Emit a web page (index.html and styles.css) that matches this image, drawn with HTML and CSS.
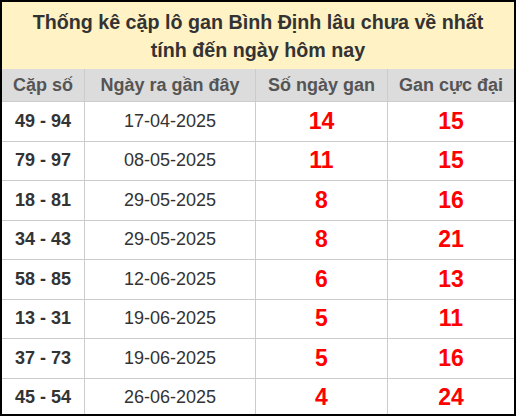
FILE: index.html
```html
<!DOCTYPE html>
<html lang="vi">
<head>
<meta charset="utf-8">
<link rel="stylesheet" href="styles.css">
</head>
<body>
<div class="wrap">
  <div class="title">Thống kê cặp lô gan Bình Định lâu chưa về nhất<br>tính đến ngày hôm nay</div>
  <div class="row head">
    <div class="cell">Cặp số</div>
    <div class="cell">Ngày ra gần đây</div>
    <div class="cell">Số ngày gan</div>
    <div class="cell">Gan cực đại</div>
  </div>
  <div class="row"><div class="cell pair">49 - 94</div><div class="cell date">17-04-2025</div><div class="cell num">14</div><div class="cell num">15</div></div>
  <div class="row"><div class="cell pair">79 - 97</div><div class="cell date">08-05-2025</div><div class="cell num">11</div><div class="cell num">15</div></div>
  <div class="row"><div class="cell pair">18 - 81</div><div class="cell date">29-05-2025</div><div class="cell num">8</div><div class="cell num">16</div></div>
  <div class="row"><div class="cell pair">34 - 43</div><div class="cell date">29-05-2025</div><div class="cell num">8</div><div class="cell num">21</div></div>
  <div class="row"><div class="cell pair">58 - 85</div><div class="cell date">12-06-2025</div><div class="cell num">6</div><div class="cell num">13</div></div>
  <div class="row"><div class="cell pair">13 - 31</div><div class="cell date">19-06-2025</div><div class="cell num">5</div><div class="cell num">11</div></div>
  <div class="row"><div class="cell pair">37 - 73</div><div class="cell date">19-06-2025</div><div class="cell num">5</div><div class="cell num">16</div></div>
  <div class="row"><div class="cell pair">45 - 54</div><div class="cell date">26-06-2025</div><div class="cell num">4</div><div class="cell num">24</div></div>
</div>
</body>
</html>
```
FILE: styles.css
```css
html, body {
  margin: 0;
  padding: 0;
  background: #fff;
}
.wrap {
  width: 516px;
  height: 416px;
  box-sizing: border-box;
  border: 2px solid #000;
  overflow: hidden;
  font-family: "Liberation Sans", Arial, sans-serif;
  color: #333;
}
.title {
  height: 67px;
  box-sizing: border-box;
  background: #fff2c4;
  text-align: center;
  font-weight: bold;
  font-size: 19.7px;
  line-height: 28px;
  padding-top: 6px;
  color: #333;
}
.row {
  display: grid;
  grid-template-columns: 83px 171px 132px 126px;
  height: 39.5px;
  box-sizing: border-box;
  border-bottom: 1px solid #ccc;
}
.row.head {
  height: 33px;
  background: #dcdcdc;
  color: #555;
  font-weight: bold;
  font-size: 18px;
}
.cell {
  display: flex;
  align-items: center;
  justify-content: center;
  border-right: 1px solid #ccc;
}
.cell:last-child {
  border-right: none;
}
.pair {
  font-weight: bold;
  font-size: 18px;
}
.date {
  font-size: 18px;
}
.num {
  color: #f00;
  font-weight: bold;
  font-size: 23px;
}
```
